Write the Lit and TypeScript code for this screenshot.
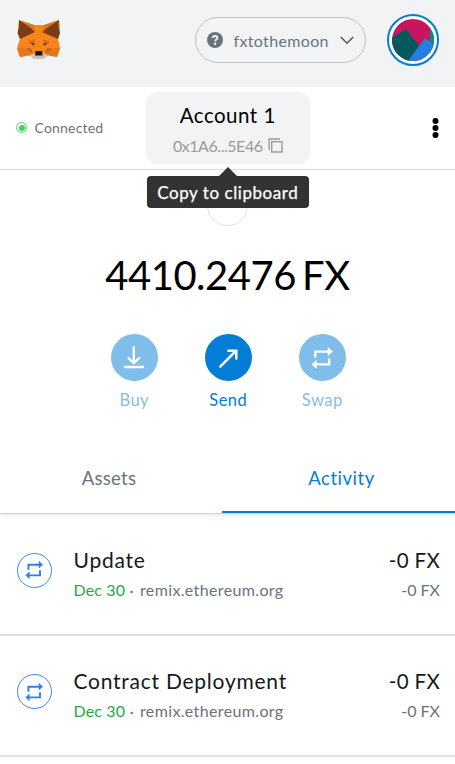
import { LitElement, html, css, svg } from "lit";
import { customElement, property } from "lit/decorators.js";

const swapShape = svg`
  <path d="M5.3 11.6V5.6H18.5" fill="none" stroke="currentColor" stroke-width="2.3"/>
  <path d="M18 1.6L22.4 5.6L18 9.6Z" fill="currentColor" stroke="currentColor" stroke-width=".6" stroke-linejoin="round"/>
  <path d="M19.2 12.4V18.4H6" fill="none" stroke="currentColor" stroke-width="2.3"/>
  <path d="M6.4 14.4L2 18.4L6.4 22.4Z" fill="currentColor" stroke="currentColor" stroke-width=".6" stroke-linejoin="round"/>`;

@customElement("wallet-header")
class WalletHeader extends LitElement {
  static styles = css`
    :host { display: flex; align-items: center; box-sizing: border-box; height: 87px; padding: 0 16px 7px 16px; background: #f2f3f4; }
    .fox { width: 45px; height: 42px; display: block; }
    .network { margin-left: auto; box-sizing: border-box; width: 171px; height: 46px; border: 1px solid #bbc0c5; border-radius: 23px; display: flex; align-items: center; padding: 0 11px 0 11px; color: #6a737d; font-size: 16px; }
    .help { width: 16px; height: 16px; display: block; }
    .name { margin-left: 10.5px; letter-spacing: 0.35px; flex: 1; white-space: nowrap; }
    .chevron { width: 14px; height: 9px; display: block; }
    .avatar { margin-left: 21px; box-sizing: border-box; width: 52px; height: 52px; border: 2px solid #037dd6; border-radius: 50%; background: #fff; padding: 3px; }
    .avatar svg { display: block; width: 42px; height: 42px; border-radius: 50%; }
  `;
  render() {
    return html`
      <svg class="fox" viewBox="0 0 45 42">
        <path d="M3 1L18 6H28L43 1L44 10L42 20L44 29L41 38L32 36L27 40H18L14 36L4 38L1 29L4 20L2 10Z" fill="#f6851b"/>
        <path d="M3 1L14 8L19 13L4 20L1.5 14L3 8Z" fill="#763d16"/>
        <path d="M43 1L32 8L26 13L42 20L44 14L42.5 8Z" fill="#763d16"/>
        <path d="M3 1L18 6L19 12L14 8Z M43 1L28 6L27 12L32 8Z" fill="#e2761b"/>
        <path d="M1 29H13L16 36L4 38Z M44 29H33L30 36L41 38Z" fill="#e4761b"/>
        <path d="M12 23L19 20L18 27Z M34 23L27 20L28 27Z" fill="#d96a17"/>
        <path d="M14.5 24L18.5 24.2L18 27Z M31.5 24L27.5 24.2L28 27Z" fill="#4a4038"/>
        <path d="M10 30L15 29L17 35Z M36 30L31 29L29 35Z" fill="#cd6116"/>
        <path d="M14 36L19 34H27L32 36L27 40H18Z" fill="#cfc0b4"/>
        <path d="M19.5 32H26L26.6 36.5H19Z" fill="#161616"/>
      </svg>
      <div class="network">
        <svg class="help" viewBox="0 0 16 16">
          <circle cx="8" cy="8" r="8" fill="#6a737d"/>
          <path d="M5.7 6C5.8 4.6 6.8 4 8.1 4C9.5 4 10.4 4.8 10.4 5.9C10.4 7.6 8.1 7.5 8.1 9.3" fill="none" stroke="#f2f3f4" stroke-width="1.9"/>
          <circle cx="8.1" cy="11.8" r="1.2" fill="#f2f3f4"/>
        </svg>
        <span class="name">fxtothemoon</span>
        <svg class="chevron" viewBox="0 0 14 9"><path d="M0.8 1L7 7.3L13.2 1" fill="none" stroke="#4d565e" stroke-width="1.5"/></svg>
      </div>
      <div class="avatar">
        <svg viewBox="0 0 42 42">
          <rect width="42" height="42" fill="#c81560"/>
          <path d="M38 0H42V42H38Z" fill="#018e7c"/>
          <path d="M-1 19L14 10L28 28L16 42H-1Z" fill="#05595a"/>
          <path d="M16 42L33 19L43 26V42Z" fill="#237ee1"/>
        </svg>
      </div>`;
  }
}

@customElement("account-bar")
class AccountBar extends LitElement {
  static styles = css`
    :host { display: grid; grid-template-columns: 145.5px 164.5px 1fr; align-items: center; box-sizing: border-box; height: 83px; padding-bottom: 1px; border-bottom: 1.5px solid #d6d9dc; background: #fff; }
    .status { display: flex; align-items: center; gap: 7.5px; padding-left: 16px; font-size: 14px; color: #6a737d; letter-spacing: 0.2px; }
    .ring { box-sizing: border-box; width: 11px; height: 11px; border: 1px solid #57d86b; border-radius: 50%; display: grid; place-items: center; }
    .ring::before { content: ""; width: 6px; height: 6px; border-radius: 50%; background: #3bd755; }
    .account { position: relative; height: 72px; box-sizing: border-box; border-radius: 12px; background: #f2f3f4; display: flex; flex-direction: column; align-items: center; padding-top: 9px; }
    .title { font-size: 20.5px; line-height: 28px; letter-spacing: 0.5px; color: #000; }
    .address { display: flex; align-items: center; gap: 5px; font-size: 16px; line-height: 24px; margin-top: 5px; color: #989a9b; white-space: nowrap; }
    .hex { letter-spacing: -0.45px; }
    .copy { width: 15px; height: 15px; }
    .tip { position: absolute; top: 84.5px; left: 1px; width: 162.5px; height: 31.5px; border-radius: 4px; background: #333; color: #fff; font-size: 17px; letter-spacing: 0.55px; line-height: 33px; text-align: center; white-space: nowrap; -webkit-text-stroke: 0.25px #fff; z-index: 2; }
    .tip::before { content: ""; position: absolute; top: -9px; left: 72px; border: 9px solid transparent; border-top: 0; border-bottom-color: #333; }
    .menu { justify-self: end; margin-right: 16px; width: 7px; height: 20px; display: block; }
  `;
  render() {
    return html`
      <div class="status"><span class="ring"></span><span class="label">Connected</span></div>
      <div class="account">
        <span class="title">Account 1</span>
        <span class="address"><span class="hex">0x1A6...5E46</span>
          <svg class="copy" viewBox="0 0 15 15" fill="none" stroke="#989a9b" stroke-width="1.4"><path d="M1.2 12V1H12"/><rect x="3.7" y="3.7" width="10.3" height="10.3"/></svg>
        </span>
        <div class="tip">Copy to clipboard</div>
      </div>
      <svg class="menu" viewBox="0 0 7 20"><circle cx="3.5" cy="3" r="3"/><circle cx="3.5" cy="10" r="3"/><circle cx="3.5" cy="17" r="3"/></svg>`;
  }
}

@customElement("balance-overview")
class BalanceOverview extends LitElement {
  static styles = css`
    :host { display: flex; flex-direction: column; align-items: center; box-sizing: border-box; height: 274px; padding-top: 15px; }
    .token { box-sizing: border-box; width: 41px; height: 41px; border: 1px solid #dfe1e3; border-radius: 50%; background: #fff; }
    .balance { margin-top: 25px; font-size: 40px; line-height: 48px; color: #000; white-space: nowrap; letter-spacing: -0.5px; word-spacing: -3.5px; }
    .actions { display: flex; margin-top: 35px; margin-left: 1.5px; }
    .action { width: 94px; display: flex; flex-direction: column; align-items: center; color: #037dd6; font-size: 16.5px; line-height: 22px; letter-spacing: 0.45px; }
    .dim { opacity: 0.5; }
    .disc { width: 47px; height: 47px; border-radius: 50%; background: #037dd6; color: #fff; display: grid; place-items: center; margin-bottom: 7.5px; }
    .disc svg { display: block; width: 24px; height: 24px; }
  `;
  render() {
    return html`
      <div class="token"></div>
      <div class="balance">4410.2476 FX</div>
      <div class="actions">
        <div class="action dim"><span class="disc"><svg viewBox="0 0 24 24" fill="none" stroke="currentColor" stroke-width="2.4" stroke-linecap="round" stroke-linejoin="round"><path d="M11.8 1V17M6.4 12L11.8 17.2L17.2 12M3 21H21"/></svg></span><span class="label">Buy</span></div>
        <div class="action"><span class="disc"><svg viewBox="0 0 24 24" fill="none" stroke="currentColor" stroke-width="2.5" stroke-linecap="round"><path d="M4.3 20.6L19.8 5M12.3 4.8H20.3V12.6"/></svg></span><span class="label">Send</span></div>
        <div class="action dim"><span class="disc"><svg viewBox="0 0 24 24">${swapShape}</svg></span><span class="label">Swap</span></div>
      </div>`;
  }
}

@customElement("activity-row")
class ActivityRow extends LitElement {
  @property() heading = "";
  static styles = css`
    :host { display: flex; box-sizing: border-box; height: 121.5px; padding: 31.5px 15px 0 17px; border-bottom: 2px solid #dfe0e2; }
    .icon { box-sizing: border-box; width: 35px; height: 35px; margin-top: 7px; border: 1.5px solid #3d87ef; border-radius: 50%; color: #2f80ed; display: grid; place-items: center; }
    .icon svg { width: 20px; height: 20px; display: block; margin-left: -1px; }
    .main { flex: 1; margin-left: 21.5px; white-space: nowrap; }
    .side { text-align: right; white-space: nowrap; }
    .top { font-size: 21px; line-height: 28px; letter-spacing: 0.75px; color: #15181b; }
    .amount { font-size: 20.5px; letter-spacing: 0.3px; }
    .sub { font-size: 16px; line-height: 24px; margin-top: 4px; color: #6a737d; }
    .date { color: #28a745; letter-spacing: 0.15px; }
    .site { margin-left: 2px; letter-spacing: 0.36px; }
  `;
  render() {
    return html`
      <span class="icon"><svg viewBox="0 0 24 24">${swapShape}</svg></span>
      <div class="main">
        <div class="top">${this.heading}</div>
        <div class="sub"><span class="date">Dec 30 · </span><span class="site">remix.ethereum.org</span></div>
      </div>
      <div class="side"><div class="top amount">-0 FX</div><div class="sub">-0 FX</div></div>`;
  }
}

@customElement("app-root")
class AppRoot extends LitElement {
  static styles = css`
    :host { display: block; width: 455px; height: 764px; overflow: hidden; background: #fff; font-family: Lato, "Liberation Sans", sans-serif; }
    .tabs { display: grid; grid-template-columns: 222px 233px; height: 69px; position: relative; box-shadow: 0 1px 1px #d2d4d6, 0 3px 6px rgba(0, 0, 0, 0.07); background: #fff; font-size: 18.5px; }
    .tab { box-sizing: border-box; display: flex; justify-content: center; padding-top: 21px; line-height: 26px; color: #6a737d; }
    .assets { padding-right: 4px; letter-spacing: 0.3px; }
    .active { color: #037dd6; border-bottom: 2.5px solid #037dd6; padding-left: 6px; letter-spacing: 0.5px; }
    .list { padding-top: 1px; }
  `;
  render() {
    return html`
      <wallet-header></wallet-header>
      <account-bar></account-bar>
      <balance-overview></balance-overview>
      <div class="tabs"><div class="tab assets">Assets</div><div class="tab active">Activity</div></div>
      <div class="list">
        <activity-row heading="Update"></activity-row>
        <activity-row heading="Contract Deployment"></activity-row>
      </div>`;
  }
}
